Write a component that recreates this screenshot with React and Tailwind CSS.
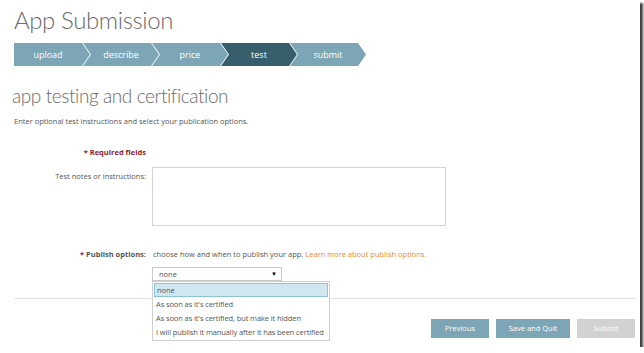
const steps = ['upload', 'describe', 'price', 'test', 'submit'];

const options = [
  'none',
  "As soon as it's certified",
  "As soon as it's certified, but make it hidden",
  'I will publish it manually after it has been certified',
];

export default function App() {
  return (
    <div className="w-[640px] h-[347px] bg-white shadow-[3px_3px_2px_rgba(0,0,0,0.75)] relative overflow-hidden font-['Open_Sans',sans-serif] text-[#555]">
      {/* header */}
      <div className="pl-[14px] pt-[4px]">
        <h1 className="font-['Lato',sans-serif] text-[24px] leading-[32px] tracking-[-0.4px] font-light text-[#6a6a6a]">App Submission</h1>
        <div className="flex mt-[7px] h-[23px]">
          {steps.map((s, i) => (
            <div
              key={s}
              className={
                (i === 3 ? 'bg-[#365e6b] ' : 'bg-[#7ca5b5] ') +
                (i === 0
                  ? 'pl-0 [clip-path:polygon(0_0,68px_0,76px_50%,68px_100%,0_100%)] '
                  : 'ml-[-7px] pl-[8px] [clip-path:polygon(0_0,68px_0,76px_50%,68px_100%,0_100%,8px_50%)] ') +
                'w-[76px] pr-[8px] flex items-center justify-center text-white text-[9px]'
              }
            >
              {s}
            </div>
          ))}
        </div>
      </div>

      {/* section */}
      <div className="pl-[12px] mt-[18px]">
        <h2 className="font-['Lato',sans-serif] text-[19px] leading-[24px] tracking-[-0.4px] font-light text-[#6a6a6a]">app testing and certification</h2>
        <p className="mt-[7px] text-[7.5px] leading-[12px] pl-[2px] text-[#555]">
          Enter optional test instructions and select your publication options.
        </p>
      </div>

      <div className="grid grid-cols-[146px_1fr] gap-x-[6px] mt-[19px] text-[7.5px] leading-[12px]">
        <div className="text-right font-bold text-[#8a1c2e]">* Required fields</div>
        <div />

        <div className="text-right pt-[3px] mt-[9px]">Test notes or instructions:</div>
        <div className="mt-[9px] w-[294px] h-[59px] border border-[#d4d4d4]" />

        <div className="text-right mt-[22px] font-bold text-[#555]">
          <span className="text-[#a01c30]">* </span>Publish options:
        </div>
        <div className="mt-[22px] pl-[1px]">
          choose how and when to publish your app.{' '}
          <span className="text-[#ea8a36]">Learn more about publish options.</span>
        </div>

        <div />
        <div className="relative mt-[7px]">
          <div className="w-[130px] h-[14px] border border-[#c8c8c8] flex items-center justify-between pl-[6px] pr-[4px] text-[#555]">
            <span>none</span>
            <span className="text-[6px] text-black">▼</span>
          </div>
          <div className="absolute left-0 top-[14px] w-[178px] h-[60px] bg-white border border-[#cfcfcf] z-10 pt-[1px] px-[1px] tracking-[-0.1px]">
            {options.map((o, i) => (
              <div
                key={o}
                className={
                  'h-[14px] flex items-center pl-[2px] whitespace-nowrap ' +
                  (i === 0 ? 'bg-[#d0e7f0] border border-[#8cc3d8]' : '')
                }
              >
                {o}
              </div>
            ))}
          </div>
        </div>
      </div>

      <div className="mx-[14px] mt-[17px] h-[1px] bg-[#e2e2e2] w-[622px]" />

      <div className="flex justify-end gap-[7px] pr-[5px] mt-[20px] text-[7.5px] text-white">
        <button className="w-[58px] h-[19px] bg-[#7ca5b5]">Previous</button>
        <button className="w-[74px] h-[19px] bg-[#7ca5b5]">Save and Quit</button>
        <button className="w-[58px] h-[19px] bg-[#d2d2d2]">Submit</button>
      </div>
    </div>
  );
}
